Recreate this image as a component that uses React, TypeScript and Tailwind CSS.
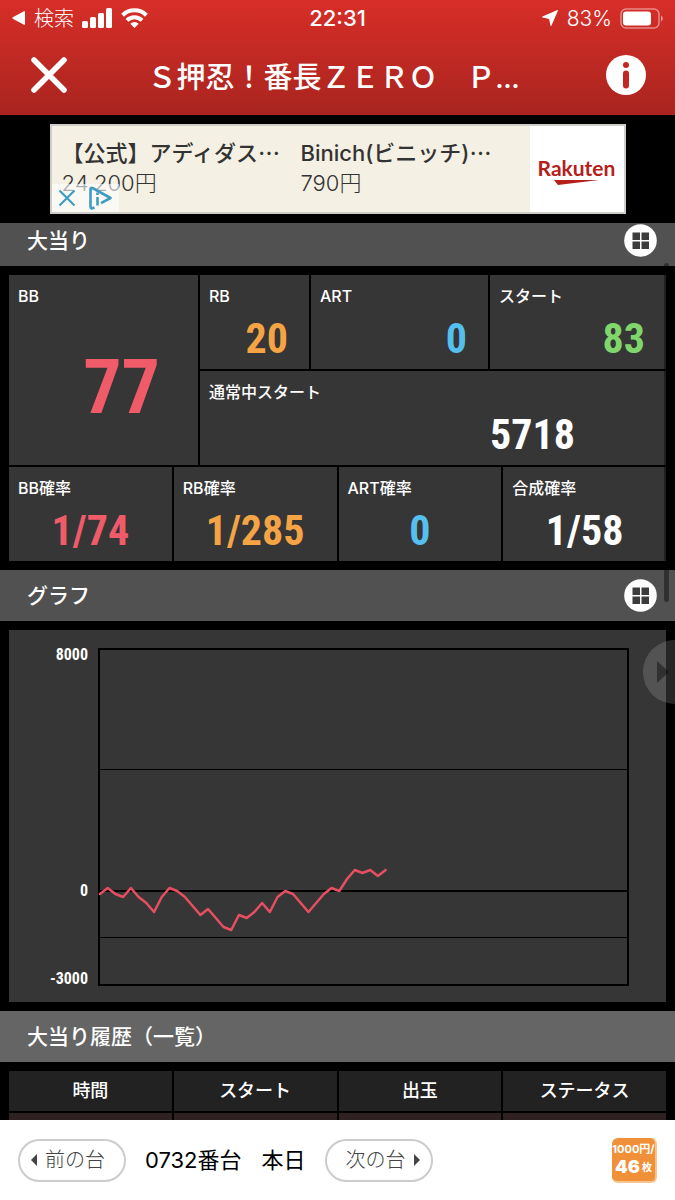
import type { ReactNode } from "react";
import clsx from "clsx";

const jp = "font-['Inter','Noto_Sans_CJK_JP',sans-serif]";
const condensed = "font-['Liberation_Sans_Narrow','Roboto_Condensed','Liberation_Sans',sans-serif]";

// medal difference in hundreds, one sample per step
const history = [
    -1, 1, -1, -2, 1, -2, -4, -7, -2, 1, 0, -2, -5, -8, -6, -9, -12, -13, -8, -9,
    -7, -4, -7, -2, 0, -1, -4, -7, -4, -1, 1, 0, 4, 7, 6, 7, 5, 7,
];

const rates = [
    { label: "BB確率", value: "1/74", color: "text-[#ef5b68]" },
    { label: "RB確率", value: "1/285", color: "text-[#f5a445]" },
    { label: "ART確率", value: "0", color: "text-[#55bfed]" },
    { label: "合成確率", value: "1/58", color: "text-white" },
];

const columns = ["時間", "スタート", "出玉", "ステータス"];

function StatusBar() {
    return (
        <div className="grid h-9 grid-cols-3 items-center px-3 text-white">
            <div className="flex items-center gap-2">
                <svg width="14" height="14" viewBox="0 0 14 14" fill="currentColor">
                    <path d="M13 .8v12.4c0 .6-.5.7-1 .5L.8 7.7c-.6-.4-.6-1 0-1.4L12 .3c.5-.2 1-.1 1 .5z" />
                </svg>
                <span className="font-['Noto_Sans_CJK_JP',sans-serif] text-xl leading-none font-light">検索</span>
                <svg width="31" height="20" viewBox="0 0 31 20" fill="currentColor">
                    <rect x="0" y="13" width="6" height="7" rx="1.5" />
                    <rect x="8" y="9" width="6" height="11" rx="1.5" />
                    <rect x="16" y="5" width="6" height="15" rx="1.5" />
                    <rect x="24" y="0" width="6" height="20" rx="1.5" />
                </svg>
                <svg width="27" height="20" viewBox="0 0 27 20" fill="none" stroke="currentColor" strokeWidth="4">
                    <path d="M1.6 7.2a17 17 0 0 1 23.8 0" />
                    <path d="M6 12.400a10.600 10.600 0 0 1 15 0" />
                    <path d="M13.5 20l-4.200-4.300a6 6 0 0 1 8.400 0z" fill="currentColor" stroke="none" />
                </svg>
            </div>
            <div className="text-center font-['Inter',sans-serif] text-[22px] leading-none font-medium">22:31</div>
            <div className="flex items-center justify-end gap-2">
                <svg width="18" height="18" viewBox="0 0 18 18" fill="currentColor" stroke="currentColor" strokeLinejoin="round">
                    <path d="M16.500 1.500L10 16.500 8.500 9.500 1.500 8z" />
                </svg>
                <span className="font-['Inter',sans-serif] text-[21px] leading-none font-light">83%</span>
                <svg width="43" height="21" viewBox="0 0 43 21" fill="none">
                    <rect x="1" y="1" width="38" height="19" rx="5" stroke="#fff" strokeOpacity=".45" strokeWidth="1.5" />
                    <rect x="3" y="3.500" width="28" height="14" rx="3" fill="#fff" />
                    <path d="M41 7.500v6c2.400-1.200 2.400-4.800 0-6z" fill="#fff" fillOpacity=".5" />
                </svg>
            </div>
        </div>
    );
}

function Header() {
    return (
        <header className="shrink-0 bg-linear-to-b from-[#d82e28] to-[#a9241f] pb-px">
            <StatusBar />
            <div className="flex h-[78px] items-center justify-between px-7 text-white">
                <button aria-label="閉じる" className="p-0.5">
                    <svg width="38" height="38" viewBox="0 0 38 38" stroke="currentColor" strokeWidth="5.500" strokeLinecap="round">
                        <path d="M4 4l30 30M34 4L4 34" />
                    </svg>
                </button>
                <h1 className="truncate font-['Noto_Sans_CJK_JP',sans-serif] text-[29px] leading-10 font-medium">
                    Ｓ押忍！番長ＺＥＲＯ　Ｐ<span className="font-['Inter',sans-serif] text-2xl font-bold">...</span>
                </h1>
                <button aria-label="情報" className="pl-2">
                    <svg width="42" height="42" viewBox="0 0 42 42">
                        <circle cx="21" cy="21" r="20" fill="#fff" />
                        <circle cx="21" cy="11" r="3" fill="#c22821" />
                        <rect x="18" y="16.500" width="6" height="18" rx="3" fill="#c22821" />
                    </svg>
                </button>
            </div>
        </header>
    );
}

function AdItem({ title, price }: { title: string; price: string }) {
    return (
        <div className={clsx("min-w-0 flex-1 pt-[9px] pl-2.5 text-[#333]", jp)}>
            <div className="truncate text-[22px] leading-8 font-medium">
                {title}
                <span className="font-['Noto_Sans_CJK_JP',sans-serif]" lang="ja">…</span>
            </div>
            <div className="text-[22px] leading-7 font-light">{price}</div>
        </div>
    );
}

function AdBanner() {
    return (
        <div className="shrink-0 bg-black py-[9px]">
            <a
                href="#ad"
                className="relative mx-auto flex h-[90px] w-[576px] max-w-full overflow-hidden border-2 border-[#cfcdc8] bg-[#f4f0e3]"
            >
                <AdItem title="【公式】アディダス" price="24,200円" />
                <AdItem title="Binich(ビニッチ)" price="790円" />
                <div className="flex w-[94px] flex-col items-center justify-center gap-0.5 bg-white pt-1 text-[#b5201a]">
                    <span className="font-['Lato',sans-serif] text-[21px] leading-5 font-bold">Rakuten</span>
                    <svg width="46" height="5" viewBox="0 0 46 5" fill="currentColor">
                        <path d="M0 0h45L4 5z" />
                    </svg>
                </div>
                <span className="absolute bottom-0 left-0 flex h-7 items-center gap-3 bg-white/60 px-1.5 text-[#3f9dc4]">
                    <svg width="18" height="18" viewBox="0 0 18 18" stroke="currentColor" strokeWidth="2.200">
                        <path d="M1.500 1.500l15 15M16.500 1.500l-15 15" />
                    </svg>
                    <svg width="25" height="24" viewBox="0 0 25 24" fill="none" stroke="currentColor" strokeWidth="2.600" strokeLinejoin="round">
                        <path d="M6.500 21.500l-2 .8c-1 .3-2-.3-2-1.500V3c0-1.200 1-1.600 2-1L22.500 12l-9.500 5.200" />
                        <path d="M9.500 11v8.500M9.500 6.500v2.600" />
                    </svg>
                </span>
            </a>
        </div>
    );
}

function SectionBar({ title, grid, className }: { title: string; grid?: boolean; className: string }) {
    return (
        <div className={clsx("flex h-[51px] items-center justify-between pr-[18px] pl-[27px]", className)}>
            <h2 className={clsx("text-[21px] leading-8 font-medium text-white", jp)}>{title}</h2>
            {grid && (
                <button aria-label={`${title}の表示切替`}>
                    <svg width="33" height="33" viewBox="0 0 33 33">
                        <circle cx="16.500" cy="16.500" r="16.300" fill="#fff" />
                        <path d="M8.500 8.500h7.500v7.500h-7.500zM17.500 8.500h7.500v7.500h-7.500zM8.500 17.500h7.500v7.500h-7.500zM17.500 17.500h7.500v7.500h-7.500z" fill="#3c3c3c" />
                    </svg>
                </button>
            )}
        </div>
    );
}

function Cell({ label, className, children }: { label: string; className?: string; children: ReactNode }) {
    return (
        <div className={clsx("bg-[#363636] px-[9px] pt-2", className)}>
            <div className={clsx("text-base leading-[26px] font-medium text-white", jp)}>{label}</div>
            {children}
        </div>
    );
}

function Value({ className, children }: { className: string; children: ReactNode }) {
    return <div className={clsx("font-bold", condensed, className)}>{children}</div>;
}

function Counts() {
    return (
        <div className="flex flex-col gap-0.5 px-[9px] py-[9px]">
            <div className="grid grid-cols-[189fr_109fr_177fr_176fr] grid-rows-[94px_94px] gap-0.5">
                <Cell label="BB" className="row-span-2">
                    <Value className="pt-8 pr-[29px] text-right text-[76px] leading-[92px] text-[#ef5b68]">77</Value>
                </Cell>
                <Cell label="RB">
                    <Value className="pr-3 text-right text-[42px] leading-[60px] text-[#f5a445]">20</Value>
                </Cell>
                <Cell label="ART">
                    <Value className="pr-3 text-right text-[42px] leading-[60px] text-[#55bfed]">0</Value>
                </Cell>
                <Cell label="スタート">
                    <Value className="pr-3 text-right text-[42px] leading-[60px] text-[#80d66c]">83</Value>
                </Cell>
                <Cell label="通常中スタート" className="col-span-3">
                    <Value className="pr-[82px] text-right text-[42px] leading-[60px] text-white">5718</Value>
                </Cell>
            </div>
            <div className="grid h-[94px] grid-cols-4 gap-0.5">
                {rates.map((rate) => (
                    <Cell key={rate.label} label={rate.label}>
                        <Value className={clsx("text-center text-[42px] leading-[60px]", rate.color)}>{rate.value}</Value>
                    </Cell>
                ))}
            </div>
        </div>
    );
}

function Graph() {
    const points = history.map((v, i) => `${91 + i * 7.72},${261 - v * 3}`).join(" ");

    return (
        <div className="px-[9px] py-[9px]">
            <svg viewBox="0 0 657 372" className="block w-full bg-[#363636]" role="img" aria-label="グラフ">
                <g stroke="#000" fill="none">
                    <rect x="90" y="19" width="529" height="336" strokeWidth="2" />
                    <path d="M90 139.500h529M90 307.500h529" strokeWidth="1" />
                    <path d="M90 261h529" strokeWidth="2" />
                </g>
                <polyline points={points} fill="none" stroke="#e64e62" strokeWidth="2.500" strokeLinejoin="round" strokeLinecap="round" />
                <g className={clsx("text-base font-bold", condensed)} fill="#fff" textAnchor="end">
                    <text x="79" y="30">8000</text>
                    <text x="79" y="266">0</text>
                    <text x="79" y="354">-3000</text>
                </g>
            </svg>
        </div>
    );
}

function HistoryTable() {
    return (
        <div className="px-[7px] py-[7px]">
            <table className="w-full table-fixed border-separate border-spacing-0.5">
                <thead>
                    <tr>
                        {columns.map((name) => (
                            <th key={name} className={clsx("h-10 bg-[#222] text-lg leading-6 font-medium text-white", jp)}>
                                {name}
                            </th>
                        ))}
                    </tr>
                </thead>
                <tbody>
                    <tr>
                        {columns.map((name) => (
                            <td key={name} className="h-10 bg-[#2f2122]" />
                        ))}
                    </tr>
                </tbody>
            </table>
        </div>
    );
}

function Footer() {
    const pill = "flex h-[43px] w-[108px] items-center justify-center gap-2 rounded-full border-2 border-[#ccc] text-xl font-light text-[#444]";

    return (
        <footer className={clsx("flex h-20 shrink-0 items-center bg-white px-[18px]", jp)}>
            <button className={clsx(pill, "pr-2")}>
                <svg width="6" height="12" viewBox="0 0 6 12" fill="currentColor">
                    <path d="M6 0v12L0 6z" />
                </svg>
                前の台
            </button>
            <div className="flex gap-5 px-[19px] text-[22px] leading-8 text-black">
                <span>0732番台</span>
                <span>本日</span>
            </div>
            <button className={clsx(pill, "pl-2")}>
                次の台
                <svg width="6" height="12" viewBox="0 0 6 12" fill="currentColor">
                    <path d="M0 0v12l6-6z" />
                </svg>
            </button>
            <button className="ml-auto flex h-[45px] w-[45px] flex-col items-center justify-center rounded-md border-r-2 border-b-2 border-[#f7c48f] bg-[#f0913a] font-bold text-white">
                <span className="text-[11px] leading-4">1000円/</span>
                <span className="flex items-center gap-0.5">
                    <span className="text-lg leading-5 font-black">46</span>
                    <span className="text-[10px] leading-5">枚</span>
                </span>
            </button>
        </footer>
    );
}

export default function App() {
    return (
        <div className="flex h-screen flex-col bg-black">
            <Header />
            <AdBanner />
            <div className="relative flex min-h-0 flex-1 flex-col overflow-hidden">
                <main className="flex-1 overflow-y-auto [scrollbar-width:none]">
                    <SectionBar title="大当り" grid className="-mt-2 bg-[#515151]" />
                    <Counts />
                    <SectionBar title="グラフ" grid className="bg-[#515151]" />
                    <Graph />
                    <SectionBar title="大当り履歴（一覧）" className="bg-[#656565]" />
                    <HistoryTable />
                </main>
                {/* Scroll thumb */}
                <div className="absolute top-10 right-1.5 h-[339px] w-[5px] rounded-full bg-black/40" />
                {/* Side drawer handle */}
                <button
                    aria-label="次へ"
                    className="absolute top-[417px] right-0 flex h-16 w-8 items-center justify-center rounded-l-full bg-white/15 pl-2 text-black/40"
                >
                    <svg width="12" height="22" viewBox="0 0 12 22" fill="currentColor">
                        <path d="M0 0v22l12-11z" />
                    </svg>
                </button>
            </div>
            <Footer />
        </div>
    );
}
